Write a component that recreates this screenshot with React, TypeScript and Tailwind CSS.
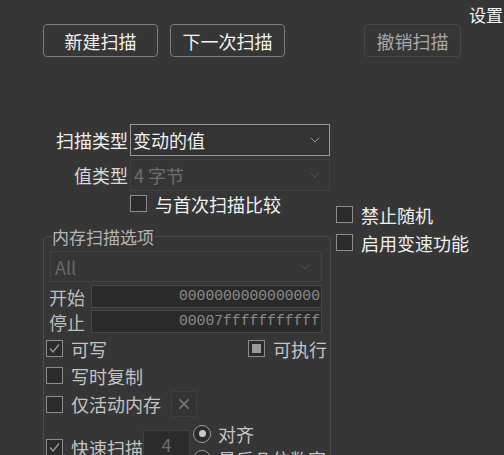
import { ChevronDown, X } from "lucide-react";

const font = "font-['Noto_Sans_CJK_SC','Noto_Sans',sans-serif]";

function Box({ checked, partial }: { checked?: boolean; partial?: boolean }) {
  return (
    <span className="w-[17px] h-[17px] shrink-0 border border-[#8c8c8c] bg-[#2b2b2b] flex items-center justify-center">
      {checked && (
        <svg width="13" height="13" viewBox="0 0 13 13" fill="none">
          <path d="M2 6.5 L5 10 L11 2.5" stroke="#9a9a9a" strokeWidth="1.3" />
        </svg>
      )}
      {partial && <span className="w-[9px] h-[9px] bg-[#9a9a9a]" />}
    </span>
  );
}

function Radio({ checked }: { checked?: boolean }) {
  return (
    <span className="w-[18px] h-[18px] shrink-0 rounded-full border-[1.5px] border-[#9a9a9a] bg-[#2b2b2b] flex items-center justify-center">
      {checked && <span className="w-[7px] h-[7px] rounded-full bg-[#c8c8c8]" />}
    </span>
  );
}

function Btn({ label, disabled, w }: { label: string; disabled?: boolean; w: string }) {
  return (
    <button
      className={`h-[33px] ${w} rounded-[4px] border text-[18px] leading-none ${
        disabled ? "border-[#474747] text-[#a8a8a8]" : "border-[#7c7c7c] text-[#f2f2f2]"
      }`}
    >
      {label}
    </button>
  );
}

export default function App() {
  return (
    <div className={`w-[504px] h-[455px] overflow-hidden whitespace-nowrap bg-[#363636] text-[#f0f0f0] ${font}`}>
      {/* top buttons */}
      <div className="flex items-start h-[57px]">
        <div className="flex pt-[24px] pl-[43px] gap-[12px]">
          <Btn label="新建扫描" w="w-[115px]" />
          <Btn label="下一次扫描" w="w-[115px]" />
        </div>
        <div className="pt-[24px] ml-[79px]">
          <Btn label="撤销扫描" disabled w="w-[97px]" />
        </div>
        <div className="ml-auto mt-[6px] text-[17px] leading-none pr-[1px] text-[#f5f5f5]">设置</div>
      </div>

      <div className="flex">
        <div className="w-[331px] shrink-0">
          {/* scan type */}
          <div className="flex items-center h-[32px] mt-[67px]">
            <span className="w-[130px] pr-[2px] text-right text-[18px] leading-none">扫描类型</span>
            <div className="w-[200px] h-[32px] border border-[#9a9a9a] bg-[#333] flex items-center pl-[2px] pr-[6px]">
              <span className="text-[18px] leading-none flex-1">变动的值</span>
              <ChevronDown size={16} strokeWidth={1.2} color="#b0b0b0" />
            </div>
          </div>
          <div className="flex items-center h-[32px] mt-[3px]">
            <span className="w-[130px] pr-[2px] text-right text-[18px] leading-none text-[#d8d8d8]">值类型</span>
            <div className="w-[200px] h-[32px] border border-[#404040] flex items-center pl-[3px] pr-[6px]">
              <span className="text-[18px] leading-none flex-1 text-[#6e6e6e]">4 字节</span>
              <ChevronDown size={16} strokeWidth={1.2} color="#5a5a5a" />
            </div>
          </div>
          <div className="flex items-center h-[17px] mt-[4px] pl-[130px] gap-[8px]">
            <Box />
            <span className="text-[18px] leading-none">与首次扫描比较</span>
          </div>

          {/* memory scan options */}
          <fieldset className="ml-[43px] mt-[16px] w-[288px] min-w-0 border border-[#4a4a4a] rounded-[5px] pl-[6px] pr-[8px] pb-[20px]">
            <legend className="ml-[2px] text-[17px] leading-[17px] text-[#b4b4b4]">内存扫描选项</legend>
            <div className="mt-[6px] h-[31px] border border-[#424242] flex items-center pl-[4px] pr-[8px]">
              <span className="flex-1 text-[18px] leading-none text-[#6a6a6a]">All</span>
              <ChevronDown size={16} strokeWidth={1.2} color="#5a5a5a" />
            </div>
            <div className="flex items-center h-[23px] mt-[3px]">
              <span className="w-[42px] -ml-[1px] text-[18px] leading-none text-[#bdbdbd]">开始</span>
              <div className="flex-1 h-[23px] bg-[#2a2a2a] border border-[#464646] flex items-center justify-end pr-[1px] font-['Liberation_Mono',monospace] text-[14.7px] leading-none text-[#8a8a8a]">
                0000000000000000
              </div>
            </div>
            <div className="flex items-center h-[23px] mt-[2px]">
              <span className="w-[42px] -ml-[1px] text-[18px] leading-none text-[#bdbdbd]">停止</span>
              <div className="flex-1 h-[23px] bg-[#2a2a2a] border border-[#464646] flex items-center justify-end pr-[1px] font-['Liberation_Mono',monospace] text-[14.7px] leading-none text-[#8a8a8a]">
                00007fffffffffff
              </div>
            </div>
            <div className="flex items-center h-[17px] mt-[7px] -ml-[4px]">
              <Box checked />
              <span className="ml-[8px] text-[18px] leading-none text-[#c4c4c4]">可写</span>
              <span className="ml-auto -mr-[5px] flex items-center gap-[8px]">
                <Box partial />
                <span className="text-[18px] leading-none text-[#c4c4c4]">可执行</span>
              </span>
            </div>
            <div className="flex items-center h-[17px] mt-[10px] -ml-[4px]">
              <Box />
              <span className="ml-[8px] text-[18px] leading-none text-[#c4c4c4]">写时复制</span>
            </div>
            <div className="flex items-center h-[26px] mt-[7px] -ml-[4px]">
              <Box />
              <span className="ml-[8px] text-[18px] leading-none text-[#c4c4c4]">仅活动内存</span>
              <span className="ml-[10px] w-[26px] h-[26px] rounded-[3px] border border-[#404040] bg-[#333] flex items-center justify-center">
                <X size={16} strokeWidth={3} color="#6e6e6e" />
              </span>
            </div>
            <div className="flex mt-[8px] -ml-[4px]">
              <div className="flex items-start shrink-0 mt-[5px]">
                <span className="mt-[9px]">
                  <Box checked />
                </span>
                <span className="ml-[8px] mt-[9px] text-[18px] leading-none text-[#c4c4c4]">快速扫描</span>
                <span className="w-[47px] h-[28px] shrink-0 bg-[#2b2b2b] border border-[#404040] flex items-center justify-center text-[18px] leading-none text-[#6e6e6e]">
                  4
                </span>
              </div>
              <div className="ml-[3px] flex flex-col gap-[8px] shrink-0">
                <div className="flex items-center h-[17px] gap-[7px]">
                  <Radio checked />
                  <span className="text-[18px] leading-none text-[#c4c4c4]">对齐</span>
                </div>
                <div className="flex items-center h-[17px] gap-[7px]">
                  <Radio />
                  <span className="text-[18px] leading-none text-[#c4c4c4]">最后几位数字</span>
                </div>
              </div>
            </div>
          </fieldset>
        </div>

        <div className="pt-[149px] pl-[5px] flex flex-col gap-[11px]">
          <div className="flex items-center h-[17px] gap-[8px]">
            <Box />
            <span className="text-[18px] leading-none">禁止随机</span>
          </div>
          <div className="flex items-center h-[17px] gap-[8px]">
            <Box />
            <span className="text-[18px] leading-none">启用变速功能</span>
          </div>
        </div>
      </div>
    </div>
  );
}
